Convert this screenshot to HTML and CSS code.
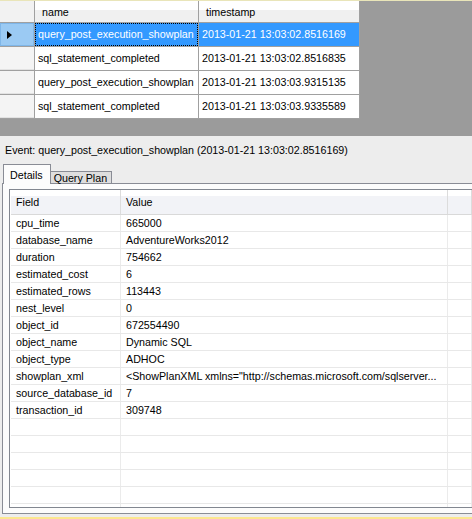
FILE: index.html
```html
<!DOCTYPE html>
<html lang="en">
<head>
    <meta charset="UTF-8">
    <meta name="viewport" content="width=device-width, initial-scale=1.0">
    <title>Extended Events - Live Data</title>
    <link rel="stylesheet" href="styles.css">
</head>
<body>
    <div class="results">
        <div class="grid">
            <div class="corner"></div>
            <div class="colhead">name</div>
            <div class="colhead">timestamp</div>

            <div class="rowhead current"><span class="arrow"></span></div>
            <div class="cell selected focus">query_post_execution_showplan</div>
            <div class="cell selected">2013-01-21 13:03:02.8516169</div>

            <div class="rowhead"></div>
            <div class="cell">sql_statement_completed</div>
            <div class="cell">2013-01-21 13:03:02.8516835</div>

            <div class="rowhead"></div>
            <div class="cell">query_post_execution_showplan</div>
            <div class="cell">2013-01-21 13:03:03.9315135</div>

            <div class="rowhead"></div>
            <div class="cell">sql_statement_completed</div>
            <div class="cell">2013-01-21 13:03:03.9335589</div>
        </div>
    </div>

    <div class="details">
        <div class="event-title">Event: query_post_execution_showplan (2013-01-21 13:03:02.8516169)</div>
        <div class="tabs">
            <span class="tab active">Details</span>
            <span class="tab">Query Plan</span>
        </div>
        <div class="tab-panel">
            <div class="props">
                <div class="prop-head"><span>Field</span><span>Value</span><span></span></div>
                <div class="prop-row"><span>cpu_time</span><span>665000</span><span></span></div>
                <div class="prop-row"><span>database_name</span><span>AdventureWorks2012</span><span></span></div>
                <div class="prop-row"><span>duration</span><span>754662</span><span></span></div>
                <div class="prop-row"><span>estimated_cost</span><span>6</span><span></span></div>
                <div class="prop-row"><span>estimated_rows</span><span>113443</span><span></span></div>
                <div class="prop-row"><span>nest_level</span><span>0</span><span></span></div>
                <div class="prop-row"><span>object_id</span><span>672554490</span><span></span></div>
                <div class="prop-row"><span>object_name</span><span>Dynamic SQL</span><span></span></div>
                <div class="prop-row"><span>object_type</span><span>ADHOC</span><span></span></div>
                <div class="prop-row"><span>showplan_xml</span><span>&lt;ShowPlanXML xmlns="http://schemas.microsoft.com/sqlserver...</span><span></span></div>
                <div class="prop-row"><span>source_database_id</span><span>7</span><span></span></div>
                <div class="prop-row"><span>transaction_id</span><span>309748</span><span></span></div>
                <div class="prop-row"><span></span><span></span><span></span></div>
                <div class="prop-row"><span></span><span></span><span></span></div>
                <div class="prop-row"><span></span><span></span><span></span></div>
                <div class="prop-row"><span></span><span></span><span></span></div>
                <div class="prop-row"><span></span><span></span><span></span></div>
                <div class="prop-row"><span></span><span></span><span></span></div>
            </div>
        </div>
    </div>
    <div class="edge"></div>
</body>
</html>
```

FILE: styles.css
```css
body {
    margin: 0;
    padding: 0;
    width: 472px;
    height: 519px;
    overflow: hidden;
    background-color: #ededed;
    font-family: "Liberation Sans", Arial, sans-serif;
    font-size: 10.7px;
    line-height: 13px;
    color: #000;
}

/* top results grid */
.results {
    height: 135px;
    background-color: #9b9b9b;
    border-top: 1px solid #e9e5b9;
}
.grid {
    display: grid;
    grid-template-columns: 34px 163px 160px;
    grid-template-rows: 21px repeat(4, 23px);
    gap: 1px;
    width: fit-content;
    background-color: #a0a0a0;
    border-right: 1px solid #a0a0a0;
    border-bottom: 1px solid #a0a0a0;
}
.corner {
    background-color: #f2f2f2;
}
.colhead {
    display: flex;
    align-items: center;
    padding: 2px 0 0 7px;
    background: linear-gradient(#ffffff 45%, #f0f0f0 45%);
}
.rowhead {
    display: flex;
    align-items: center;
    background-color: #f4f4f4;
    box-shadow: inset 0 -1px 0 #e2e2e2;
}
.rowhead.current {
    background-color: #9bcaf3;
    box-shadow: inset 0 0 0 1px #7fb6e8;
}
.arrow {
    width: 0;
    height: 0;
    margin-left: 7px;
    border-left: 5px solid #000;
    border-top: 4px solid transparent;
    border-bottom: 4px solid transparent;
}
.cell {
    display: flex;
    align-items: center;
    padding-left: 3px;
    background-color: #fff;
    white-space: nowrap;
    overflow: hidden;
}
.cell.selected {
    background-color: #3399ff;
    color: #fff;
}
.cell.focus {
    outline: 1px dotted #000;
    outline-offset: -1px;
}

/* event details */
.event-title {
    margin: 8px 0 0 5px;
}
.tabs {
    display: flex;
    align-items: flex-end;
    height: 20px;
    margin: 7px 0 -1px 3px;
    position: relative;
    z-index: 1;
}
.tab {
    padding: 0 4px 0 5px;
    border: 1px solid #898c95;
    border-bottom: none;
    background-color: #dedede;
    height: 11px;
    line-height: 12px;
    margin-bottom: 1px;
}
.tab.active {
    height: 19px;
    line-height: 20px;
    margin-bottom: 0;
    background-color: #fcfcfc;
    padding: 0 7px 0 6px;
}
.tab + .tab {
    border-left: none;
    padding-left: 3px;
}
.tab-panel {
    margin-left: 2px;
    padding: 5px 0 5px 6px;
    border: 1px solid #898c95;
    border-right: none;
    background-color: #fcfcfc;
}
.props {
    height: 317px;
    overflow: hidden;
    border: 1px solid #828790;
    border-right: none;
    background-color: #fff;
}
.prop-head,
.prop-row {
    display: grid;
    grid-template-columns: 110px 327px 1fr;
    margin-left: 1px;
}
.prop-head {
    height: 24px;
    background: linear-gradient(#ffffff 25%, #f2f3f7 25%);
    border-bottom: 1px solid #d9d9d9;
}
.prop-head span {
    display: flex;
    align-items: center;
    padding: 1px 0 0 5px;
    border-right: 1px solid #dcdcdc;
}
.prop-row {
    height: 16px;
    border-bottom: 1px solid #e8e8e8;
}
.prop-row span {
    display: flex;
    align-items: center;
    padding-left: 5px;
    border-right: 1px solid #ebebeb;
    white-space: nowrap;
    overflow: hidden;
}

.edge {
    height: 2px;
    margin-top: 3px;
    background-color: #fbe68f;
}
```
